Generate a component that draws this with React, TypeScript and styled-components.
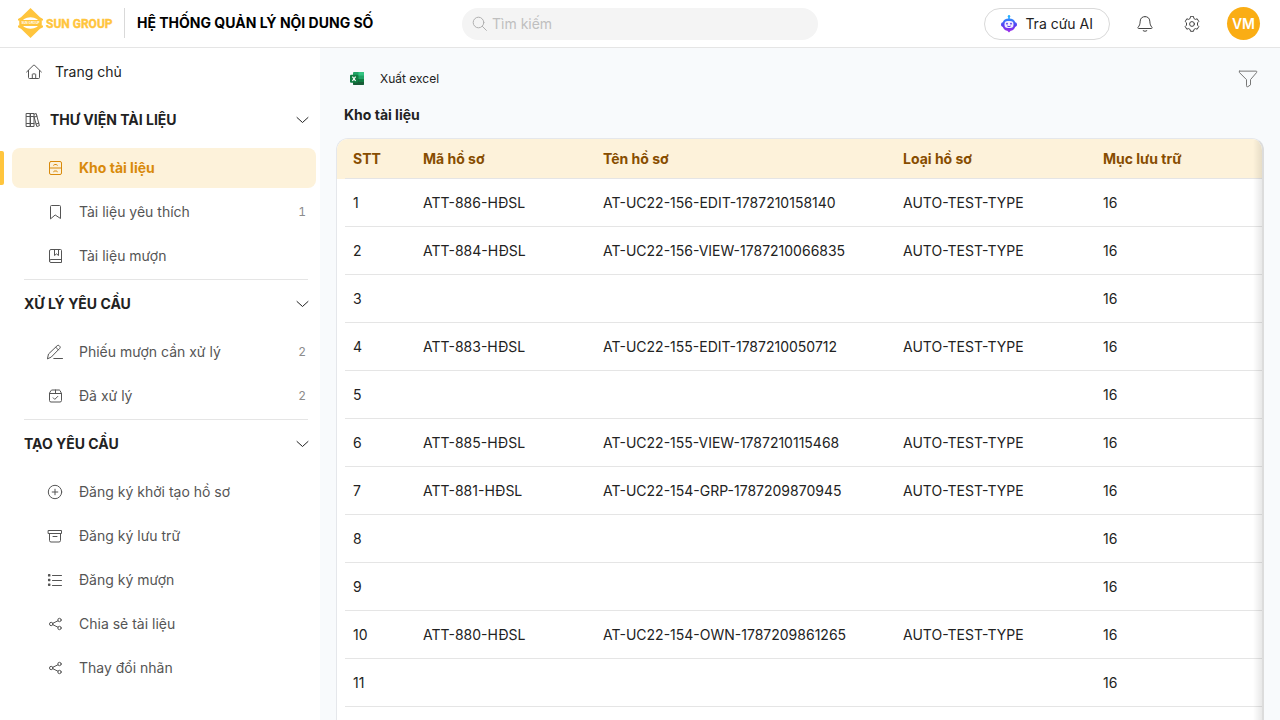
import React from 'react';
import styled, { createGlobalStyle, css } from 'styled-components';

const GlobalStyle = createGlobalStyle`
  *, *::before, *::after { box-sizing: border-box; }
  body {
    margin: 0;
    font-family: Inter, Roboto, sans-serif;
    font-size: 14px;
    line-height: 22px;
    color: #222;
    background: #f8fafc;
  }
  button, input { font: inherit; color: inherit; }
`;

const Page = styled.div`
  display: flex;
  flex-direction: column;
  height: 100vh;
  overflow: hidden;
`;

const Header = styled.header`
  display: grid;
  grid-template-columns: 1fr minmax(160px, 356px) 1fr;
  align-items: center;
  flex: none;
  height: 48px;
  padding: 0 18px;
  background: #fff;
  border-bottom: 1px solid #e5e5e5;
`;

const Brand = styled.div`
  display: flex;
  align-items: center;
  padding-bottom: 2px;
  white-space: nowrap;
`;

const LogoLink = styled.a`
  display: flex;
  padding-right: 10px;
  border-right: 1px solid #d9d9d9;
`;

const AppTitle = styled.h1`
  margin: 0 0 0 12px;
  font-size: 14px;
  font-weight: 700;
  line-height: 22px;
  color: #000;
`;

const SearchBox = styled.label`
  display: flex;
  align-items: center;
  gap: 4px;
  height: 32px;
  padding: 0 10px;
  border-radius: 16px;
  background: #f4f4f4;
  color: #b0b0b0;
`;

const SearchInput = styled.input`
  flex: 1;
  min-width: 0;
  padding: 0;
  border: 0;
  outline: 0;
  background: transparent;
  color: #222;
  &::placeholder { color: #bfbfbf; }
`;

const HeaderActions = styled.div`
  display: flex;
  align-items: center;
  justify-content: flex-end;
  padding-right: 2px;
`;

const PillButton = styled.button`
  display: flex;
  align-items: center;
  gap: 8px;
  height: 32px;
  margin-right: 19px;
  padding: 0 16px;
  border: 1px solid #d9d9d9;
  border-radius: 16px;
  background: #fff;
  white-space: nowrap;
  cursor: pointer;
`;

const IconButton = styled.button`
  display: flex;
  align-items: center;
  justify-content: center;
  width: 32px;
  height: 32px;
  margin-right: 15px;
  padding: 0;
  border: 0;
  background: transparent;
  color: #444;
  cursor: pointer;
`;

const Avatar = styled.button`
  width: 33px;
  height: 33px;
  margin-left: 4px;
  padding: 0;
  border: 0;
  border-radius: 50%;
  background: #faad14;
  color: #fff;
  font-weight: 600;
  cursor: pointer;
`;

const Body = styled.div`
  display: flex;
  flex: 1;
  min-height: 0;
`;

const Sidebar = styled.nav`
  flex: none;
  width: 320px;
  padding: 0 4px 0 12px;
  overflow: hidden;
  background: #fff;
`;

const HomeLink = styled.a`
  display: flex;
  align-items: center;
  gap: 13px;
  height: 48px;
  padding-left: 14px;
  color: #222;
  text-decoration: none;
  svg { color: #555; }
`;

const Section = styled.section`
  display: block;
`;

const SectionHeader = styled.button`
  display: flex;
  align-items: center;
  gap: 10px;
  width: 100%;
  height: 48px;
  padding: 0 6px 0 12px;
  border: 0;
  background: transparent;
  font-weight: 700;
  text-align: left;
  cursor: pointer;
  > span { flex: 1; }
  > svg:first-child { color: #555; }
`;

const ItemList = styled.ul`
  display: flex;
  flex-direction: column;
  gap: 4px;
  margin: 0;
  padding: 4px 0 3px;
  list-style: none;
`;

const Separator = styled.hr`
  height: 1px;
  margin: 0 8px 0 12px;
  border: 0;
  background: #e5e5e5;
`;

const ItemLink = styled.a<{ $active?: boolean }>`
  position: relative;
  display: flex;
  align-items: center;
  gap: 16px;
  height: 40px;
  padding: 0 10px 0 35px;
  border-radius: 8px;
  color: #555;
  text-decoration: none;
  > span { flex: 1; }
  ${(p) =>
    p.$active &&
    css`
      background: #fdf2da;
      color: #d98a0b;
      font-weight: 700;
      &::before {
        content: '';
        position: absolute;
        left: -12px;
        top: 3px;
        width: 4px;
        height: 34px;
        border-radius: 0 2px 2px 0;
        background: #ffc53d;
      }
    `}
`;

const Count = styled.small`
  font-size: 12px;
  font-variant-numeric: tabular-nums;
  color: #8c8c8c;
`;

const Main = styled.main`
  display: flex;
  flex-direction: column;
  flex: 1;
  min-width: 0;
  padding: 8px 16px 0;
  overflow: hidden;
`;

const Toolbar = styled.div`
  display: flex;
  align-items: center;
  justify-content: space-between;
  flex: none;
  height: 46px;
`;

const ExportButton = styled.button`
  display: flex;
  align-items: center;
  gap: 16px;
  height: 32px;
  padding: 0 14px;
  border: 0;
  background: transparent;
  font-size: 12px;
  cursor: pointer;
`;

const FilterButton = styled.button`
  display: flex;
  align-items: center;
  justify-content: center;
  width: 32px;
  height: 32px;
  padding: 0;
  border: 0;
  background: transparent;
  color: #777;
  cursor: pointer;
`;

const PageTitle = styled.h2`
  flex: none;
  margin: 2px 8px 12px;
  font-size: 14px;
  font-weight: 700;
  line-height: 22px;
`;

const TableFrame = styled.div`
  position: relative;
  flex: 1;
  min-height: 0;
  overflow: hidden;
  border: 1px solid #e5e7eb;
  border-right: 2px solid #dcdcdc;
  border-bottom: 0;
  border-radius: 12px 12px 0 0;
  background: #fff;
  &::after {
    content: '';
    position: absolute;
    inset: 0 0 0 auto;
    width: 9px;
    background: linear-gradient(to right, rgba(0, 0, 0, 0), rgba(0, 0, 0, 0.09));
    pointer-events: none;
  }
`;

const Table = styled.table`
  width: 100%;
  table-layout: fixed;
  border-collapse: collapse;
  text-align: left;
`;

const Column = styled.col<{ $width?: number }>`
  width: ${(p) => (p.$width ? `${p.$width}px` : 'auto')};
`;

const rule = css`
  background-image: linear-gradient(#e5e5e5, #e5e5e5);
  background-repeat: no-repeat;
  background-position: right bottom;
  background-size: 100% 1px;
  &:first-child { background-size: calc(100% - 8px) 1px; }
`;

const HeadCell = styled.th`
  height: 40px;
  padding: 0 16px;
  background-color: #fdf2da;
  color: #874d00;
  font-weight: 700;
  ${rule}
`;

const Cell = styled.td`
  height: 48px;
  padding: 0 16px;
  white-space: nowrap;
  ${rule}
`;

type GlyphProps = { size?: number; children: React.ReactNode };
const Glyph = ({ size = 16, children }: GlyphProps) => (
  <svg
    width={size}
    height={size}
    viewBox="0 0 16 16"
    fill="none"
    stroke="currentColor"
    strokeWidth={16 / size}
    strokeLinecap="round"
    strokeLinejoin="round"
    aria-hidden="true"
  >
    {children}
  </svg>
);

const HouseIcon = () => (
  <Glyph>
    <path d="M.6 8 7.2 1.5q.8-.7 1.6 0L15.4 8M2.5 6.5v7q0 1 1 1h9q1 0 1-1v-7M6.3 14.5v-4q0-.6.6-.6h2.2q.6 0 .6.6v4" />
  </Glyph>
);
const BooksIcon = () => (
  <Glyph>
    <path d="M2.500 1.500h4v13h-4zM6.500 1.500h3.500v13H6.500zM2.500 4.500h7.500M2.500 11.500h7.500M10.200 2.200l2-.7 3.200 12.200-2.600.8L10 4.600M10.500 5l2.500-.8M12 12l2.800-.8" />
  </Glyph>
);
const CabinetIcon = () => (
  <Glyph>
    <rect x="2.500" y="1.500" width="12" height="13" rx="1.500" />
    <path d="M2.500 8h12M6.700 5.300q0-.8.8-.8h2q.8 0 .8.800M6.700 11.800q0-.8.8-.8h2q.8 0 .8.800" />
  </Glyph>
);
const BookmarkIcon = () => (
  <Glyph>
    <path d="M3.500 14.500v-12q0-1 1-1h8q1 0 1 1v12l-5-3.300z" />
  </Glyph>
);
const BorrowIcon = () => (
  <Glyph>
    <path d="M14.500 11.500H4q-1.500 0-1.500 1.500t1.500 1.500h10.500v-12q0-1-1-1h-9.500q-1.500 0-1.500 1.500V13M7.500 1.500v6l2-1.600 2 1.600v-6" />
  </Glyph>
);
const PenIcon = () => (
  <Glyph>
    <path d="M.5 14.500 1.500 10 10.200 1.700q1-.9 2 0l.6.6q.9 1 0 2L4.500 12.800zM8.700 3.200l2.700 2.700M6.800 14.500h8.700" />
  </Glyph>
);
const DoneIcon = () => (
  <Glyph>
    <path d="M2.500 5.500v7q0 1.500 1.500 1.500h9q1.500 0 1.500-1.500v-7L13 2.500q-.3-.5-1-.5H5q-.7 0-1 .5zM2.500 5.500h12M8.500 2v3.500M6.200 9.800l1.600 1.600 3-3" />
  </Glyph>
);
const PlusCircleIcon = () => (
  <Glyph>
    <circle cx="8" cy="8" r="6.700" />
    <path d="M8 5.200v5.600M5.200 8h5.600" />
  </Glyph>
);
const ArchiveIcon = () => (
  <Glyph>
    <path d="M1.500 2.500h13v3h-13zM2.500 5.500v7q0 1.500 1.500 1.500h8q1.500 0 1.500-1.500v-7M6 8.500h4" />
  </Glyph>
);
const ListIcon = () => (
  <Glyph>
    <path d="M5.500 3.500h9M5.500 8.500h9M5.500 13.500h9" />
    <path strokeWidth="1.300" d="M1.600 2.700h1.200v1.200H1.600zM1.600 7.400h1.200v1.200H1.600zM1.600 12.100h1.200v1.200H1.600z" />
  </Glyph>
);
const ShareIcon = () => (
  <Glyph>
    <circle cx="4.200" cy="8" r="1.700" />
    <circle cx="12.500" cy="4" r="1.700" />
    <circle cx="12.500" cy="12" r="1.700" />
    <path d="m5.800 7.300 5.100-2.500M5.800 8.700l5.100 2.500" />
  </Glyph>
);
const ChevronIcon = () => (
  <Glyph>
    <path d="m3 5.500 5.500 5 5.500-5" />
  </Glyph>
);
const SearchIcon = () => (
  <Glyph>
    <circle cx="6.500" cy="6.500" r="5.300" />
    <path d="m10.400 10.400 4 4" />
  </Glyph>
);
const BellIcon = () => (
  <Glyph>
    <path d="M8 .6q4.400 0 4.800 4.500c.2 3.300.8 4.700 2.100 6.100.5.700.2 1.300-.6 1.300H1.700c-.8 0-1.100-.6-.6-1.300 1.300-1.400 1.900-2.800 2.100-6.100Q3.600.6 8 .6M6.200 14.800q1.800 1.200 3.600 0" />
  </Glyph>
);
const GearIcon = () => (
  <Glyph>
    <circle cx="8" cy="8" r="2.400" />
    <path d="m6.500.7-.4 1.800-1.500.9-1.800-.6-1.600 2.700 1.300 1.300v2.400l-1.300 1.300 1.600 2.700 1.800-.6 1.500.9.400 1.800h3l.4-1.800 1.500-.9 1.800.6 1.600-2.700-1.300-1.300V6.800l1.300-1.300-1.600-2.700-1.800.6-1.500-.9L9.500.7z" />
  </Glyph>
);
const FunnelIcon = () => (
  <Glyph size={20}>
    <path d="M1.200 1.700h13.600q.5.500 0 1.200L10 8.500v4.200L7.800 14.200q-1 .3-1-.8V8.500L1.200 2.900q-.5-.7 0-1.200z" />
  </Glyph>
);

const RobotIcon = () => (
  <svg width="16" height="18" viewBox="0 0 16 18" aria-hidden="true">
    <defs>
      <linearGradient id="bot" x1="0" y1="0" x2="0" y2="1">
        <stop offset="0" stopColor="#2f8cff" />
        <stop offset=".5" stopColor="#5a3df0" />
        <stop offset="1" stopColor="#a52be8" />
      </linearGradient>
    </defs>
    <path d="M7.200 1h1.600v3H7.200z" fill="#27b0ff" />
    <circle cx="8" cy="1.200" r="1.200" fill="#27b0ff" />
    <path
      fill="url(#bot)"
      d="M8 3.500c3.500 0 5.600 1.500 6.200 3.700 1.200.2 1.800 1 1.800 2.300s-.6 2.200-1.800 2.400c-.8 2.300-2.700 3.500-4.500 3.800L8 17.500l-1.700-1.800c-1.800-.3-3.700-1.500-4.500-3.800C.6 11.700 0 10.800 0 9.500s.6-2.100 1.800-2.300C2.400 5 4.500 3.500 8 3.500z"
    />
    <rect x="3.500" y="6" width="9" height="7" rx="3.200" fill="#f1edff" />
    <circle cx="6" cy="8.700" r=".9" fill="#5a3df0" />
    <circle cx="10" cy="8.700" r=".9" fill="#5a3df0" />
    <path d="M6.200 11q1.800 1.300 3.600 0" fill="none" stroke="#5a3df0" />
  </svg>
);

const ExcelIcon = () => (
  <svg width="14" height="14" viewBox="0 0 14 14" aria-hidden="true">
    <rect x="3" y="0" width="11" height="13" rx="1" fill="#21a366" />
    <path d="M8.500 0H13q1 0 1 1v2.500H8.500z" fill="#33c481" />
    <path d="M3 3.500h5.500v3.500H3z" fill="#107c41" />
    <path d="M3 7h11v5q0 1-1 1H4q-1 0-1-1z" fill="#185c37" />
    <path d="M8.500 7H14v3H8.500z" fill="#107c41" />
    <rect x="0" y="2.800" width="8" height="8" rx="1" fill="#107c41" />
    <path d="m2.400 4.600 3.200 4.400M5.600 4.600 2.400 9" stroke="#fff" strokeWidth="1.200" />
  </svg>
);

const Logo = () => (
  <svg width="96" height="30" viewBox="0 0 96 30" role="img" aria-label="Sun Group">
    <path
      fill="#ffc53d"
      d="M12.500 0 22 9.300l3 1.700v1.500h-1.500v5H25v1.700l-3 1.500L12.500 30 3 20.700 0 19.200v-1.700h1.500v-5H0V11l3-1.700z"
    />
    <ellipse cx="12.500" cy="15" rx="9" ry="5.800" fill="#fff" />
    <path fill="#ffc53d" d="M1.500 12h22v6h-22z" />
    <text
      x="12.500"
      y="16"
      textAnchor="middle"
      fontFamily="'Liberation Sans', sans-serif"
      fontSize="3"
      fontWeight="700"
      fill="#fff"
    >
      SUN GROUP
    </text>
    <text
      x="28"
      y="20"
      fontFamily="Roboto, sans-serif"
      fontSize="12"
      fontWeight="700"
      fill="#ffc53d"
      stroke="#ffc53d"
      strokeWidth=".4"
    >
      SUN GROUP
    </text>
  </svg>
);

type Item = { label: string; icon: React.ReactNode; count?: number; active?: boolean };
type Group = { title: string; icon?: React.ReactNode; items: Item[] };

const groups: Group[] = [
  {
    title: 'THƯ VIỆN TÀI LIỆU',
    icon: <BooksIcon />,
    items: [
      { label: 'Kho tài liệu', icon: <CabinetIcon />, active: true },
      { label: 'Tài liệu yêu thích', icon: <BookmarkIcon />, count: 1 },
      { label: 'Tài liệu mượn', icon: <BorrowIcon /> },
    ],
  },
  {
    title: 'XỬ LÝ YÊU CẦU',
    items: [
      { label: 'Phiếu mượn cần xử lý', icon: <PenIcon />, count: 2 },
      { label: 'Đã xử lý', icon: <DoneIcon />, count: 2 },
    ],
  },
  {
    title: 'TẠO YÊU CẦU',
    items: [
      { label: 'Đăng ký khởi tạo hồ sơ', icon: <PlusCircleIcon /> },
      { label: 'Đăng ký lưu trữ', icon: <ArchiveIcon /> },
      { label: 'Đăng ký mượn', icon: <ListIcon /> },
      { label: 'Chia sẻ tài liệu', icon: <ShareIcon /> },
      { label: 'Thay đổi nhãn', icon: <ShareIcon /> },
    ],
  },
];

const TYPE = 'AUTO-TEST-TYPE';
const rows: string[][] = [
  ['ATT-886-HĐSL', 'AT-UC22-156-EDIT-1787210158140', TYPE, '16'],
  ['ATT-884-HĐSL', 'AT-UC22-156-VIEW-1787210066835', TYPE, '16'],
  ['', '', '', '16'],
  ['ATT-883-HĐSL', 'AT-UC22-155-EDIT-1787210050712', TYPE, '16'],
  ['', '', '', '16'],
  ['ATT-885-HĐSL', 'AT-UC22-155-VIEW-1787210115468', TYPE, '16'],
  ['ATT-881-HĐSL', 'AT-UC22-154-GRP-1787209870945', TYPE, '16'],
  ['', '', '', '16'],
  ['', '', '', '16'],
  ['ATT-880-HĐSL', 'AT-UC22-154-OWN-1787209861265', TYPE, '16'],
  ['', '', '', '16'],
];

export default function App() {
  return (
    <>
      <GlobalStyle />
      <Page>
        <Header>
          <Brand>
            <LogoLink href="#home">
              <Logo />
            </LogoLink>
            <AppTitle>HỆ THỐNG QUẢN LÝ NỘI DUNG SỐ</AppTitle>
          </Brand>
          <SearchBox>
            <SearchIcon />
            <SearchInput type="text" placeholder="Tìm kiếm" aria-label="Tìm kiếm" />
          </SearchBox>
          <HeaderActions>
            <PillButton type="button">
              <RobotIcon />
              Tra cứu AI
            </PillButton>
            <IconButton type="button" aria-label="Thông báo">
              <BellIcon />
            </IconButton>
            <IconButton type="button" aria-label="Cài đặt">
              <GearIcon />
            </IconButton>
            <Avatar type="button">VM</Avatar>
          </HeaderActions>
        </Header>
        <Body>
          <Sidebar>
            <HomeLink href="#home">
              <HouseIcon />
              Trang chủ
            </HomeLink>
            {groups.map((group, index) => (
              <Section key={group.title}>
                <SectionHeader type="button" aria-expanded="true">
                  {group.icon}
                  <span>{group.title}</span>
                  <ChevronIcon />
                </SectionHeader>
                <ItemList>
                  {group.items.map((item) => (
                    <li key={item.label}>
                      <ItemLink href="#item" $active={item.active}>
                        {item.icon}
                        <span>{item.label}</span>
                        {item.count !== undefined && <Count>{item.count}</Count>}
                      </ItemLink>
                    </li>
                  ))}
                </ItemList>
                {index < groups.length - 1 && <Separator />}
              </Section>
            ))}
          </Sidebar>
          <Main>
            <Toolbar>
              <ExportButton type="button">
                <ExcelIcon />
                Xuất excel
              </ExportButton>
              <FilterButton type="button" aria-label="Bộ lọc">
                <FunnelIcon />
              </FilterButton>
            </Toolbar>
            <PageTitle>Kho tài liệu</PageTitle>
            <TableFrame>
              <Table>
                <colgroup>
                  <Column $width={70} />
                  <Column $width={180} />
                  <Column $width={300} />
                  <Column $width={200} />
                  <Column />
                </colgroup>
                <thead>
                  <tr>
                    {['STT', 'Mã hồ sơ', 'Tên hồ sơ', 'Loại hồ sơ', 'Mục lưu trữ'].map((h) => (
                      <HeadCell key={h} scope="col">
                        {h}
                      </HeadCell>
                    ))}
                  </tr>
                </thead>
                <tbody>
                  {rows.map((row, i) => (
                    <tr key={i}>
                      <Cell>{i + 1}</Cell>
                      {row.map((value, j) => (
                        <Cell key={j}>{value}</Cell>
                      ))}
                    </tr>
                  ))}
                </tbody>
              </Table>
            </TableFrame>
          </Main>
        </Body>
      </Page>
    </>
  );
}
